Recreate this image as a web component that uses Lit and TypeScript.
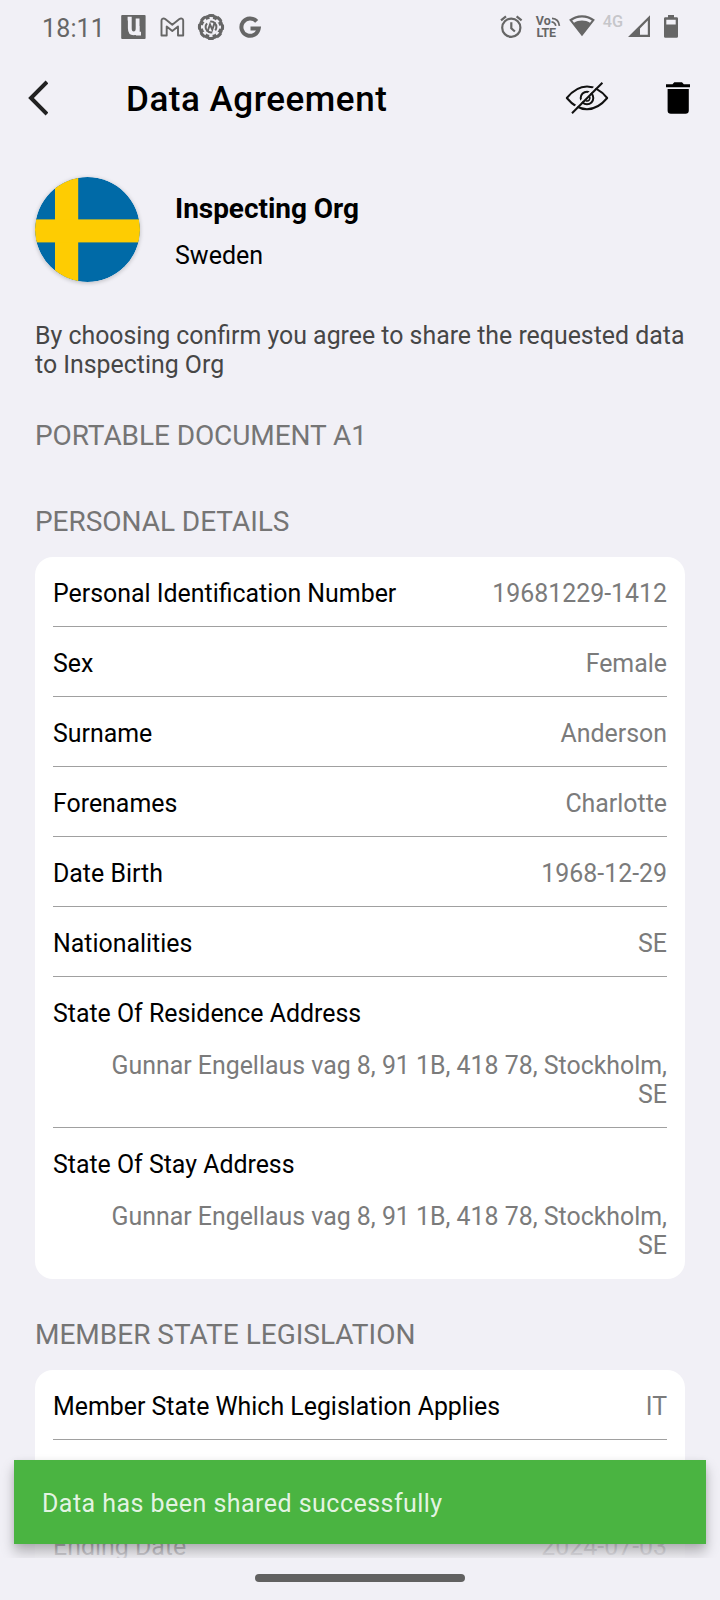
import { LitElement, html, css } from "lit";
import { customElement, property } from "lit/decorators.js";

interface Entry {
  label: string;
  value: string[];
}

const PERSONAL: Entry[] = [
  { label: "Personal Identification Number", value: ["19681229-1412"] },
  { label: "Sex", value: ["Female"] },
  { label: "Surname", value: ["Anderson"] },
  { label: "Forenames", value: ["Charlotte"] },
  { label: "Date Birth", value: ["1968-12-29"] },
  { label: "Nationalities", value: ["SE"] },
  { label: "State Of Residence Address", value: ["Gunnar Engellaus vag 8, 91 1B, 418 78, Stockholm,", "SE"] },
  { label: "State Of Stay Address", value: ["Gunnar Engellaus vag 8, 91 1B, 418 78, Stockholm,", "SE"] },
];

const LEGISLATION: Entry[] = [
  { label: "Member State Which Legislation Applies", value: ["IT"] },
  { label: "Starting Date", value: ["2023-05-21"] },
  { label: "Ending Date", value: ["2024-07-03"] },
];

@customElement("status-bar")
class StatusBar extends LitElement {
  static styles = css`
    :host { display: flex; height: 56px; box-sizing: border-box; padding: 0 42px; align-items: flex-start; justify-content: space-between; color: #666; }
    .group { display: flex; align-items: flex-start; }
    .time { font-size: 25px; line-height: 28px; margin-top: 15px; width: 78px; white-space: nowrap; letter-spacing: 0.15px; }
    svg { display: block; overflow: visible; }
    .t { font-family: Roboto, sans-serif; font-weight: 700; fill: #666; }
    .net { font-family: Roboto, sans-serif; font-weight: 500; fill: #c6c6ca; }
  `;
  render() {
    return html`
      <div class="group">
        <span class="time">18:11</span>
        <svg width="146" height="56" viewBox="120 0 146 56" fill="#666">
          <rect x="121.2" y="15" width="24.4" height="24" rx="1" />
          <path d="M127.600 18.600H129.800V28.200Q129.800 33.300 133.700 33.300T137.600 28.200V18.600M137.800 26V33.600H141" fill="none" stroke="#f1f0f6" stroke-width="3.800" />
          <path d="M161.500 35.500V20.500C161.500 18.400 163.800 18 165.200 19L172.300 24.800L179.400 19C181 18 183.200 18.400 183.200 20.500V35.500H178V26.500L172.300 31L166.700 26.500V35.500Z" fill="none" stroke="#666" stroke-width="1.900" stroke-linejoin="round" />
          <circle cx="211" cy="27" r="12.400" />
          <circle cx="211" cy="27" r="11.800" fill="none" stroke="#666" stroke-width="2.600" stroke-dasharray="5.500 3.768" stroke-dashoffset="2.750" />
          <circle cx="211" cy="27" r="8.300" fill="#f1f0f6" />
          <circle cx="211" cy="27" r="8.900" fill="none" stroke="#f1f0f6" stroke-width="2.200" stroke-dasharray="3.400 3.590" stroke-dashoffset="1.700" />
          <circle cx="211" cy="27" r="5.400" fill="none" stroke="#666" stroke-width="2" stroke-dasharray="13.500 3.465" stroke-dashoffset="-7" />
          <path d="M207.400 32L210 24.400L212.300 29.600L214.900 22" fill="none" stroke="#666" stroke-width="1.900" />
          <path d="M256.700 21.400A8.700 8.700 0 1 0 258.700 28.600H250.500" fill="none" stroke="#666" stroke-width="4" />
        </svg>
      </div>
      <svg width="178" height="56" viewBox="500 0 178 56" fill="#666">
        <g fill="none" stroke="#666" stroke-width="2.200">
          <circle cx="511.300" cy="27.700" r="9.100" />
          <path d="M511.300 22.300v6l3.600 3.200M501 20.300l5-4M521.600 20.300l-5-4" />
        </g>
        <text class="t" x="535.800" y="25.200" font-size="12.500">Vo</text>
        <text class="t" x="536.400" y="37" font-size="12.500" textLength="19.600">LTE</text>
        <path d="M552 18.300q6.800.4 7.400 7.600M551.500 21.800q3.600.4 4.300 4" fill="none" stroke="#666" stroke-width="1.700" />
        <path d="M582 15.200C577 15.200 572.600 17 569.100 19.800L582 36.300L594.900 19.800C591.400 17 587 15.200 582 15.200ZM582 17.600C585.700 17.600 589.100 18.700 591.800 20.500L590 22.800C587.700 21.300 585 20.600 582 20.600S576.300 21.300 574 22.800L572.200 20.500C574.900 18.700 578.300 17.600 582 17.600Z" fill-rule="evenodd" />
        <text class="net" x="602.800" y="26.900" font-size="16.300" textLength="20.400">4G</text>
        <path d="M628 37L650 15.200V37ZM640 34.800H647.800V20.600L640 28.400Z" fill-rule="evenodd" />
        <path d="M668 15h6v2.200h2.600q1.400 0 1.400 1.400v17.800q0 1.400-1.400 1.400h-11.200q-1.400 0-1.400-1.400v-17.800q0-1.400 1.400-1.400h2.600ZM666.300 19.800v4.600h9.400v-4.600Z" fill-rule="evenodd" />
      </svg>
    `;
  }
}

@customElement("detail-card")
class DetailCard extends LitElement {
  @property({ attribute: false }) entries: Entry[] = [];
  static styles = css`
    :host { display: block; margin: 0 35px; padding: 0 18px; background: #fff; border-radius: 18px; }
    .row { display: flex; justify-content: space-between; box-sizing: border-box; padding-top: 22px; border-bottom: 1px solid #a0a0a0; height: 70px; line-height: 29px; font-size: 24.9px; white-space: nowrap; }
    .row:last-child { border-bottom-color: transparent; }
    .row.long { flex-direction: column; justify-content: flex-start; height: 151px; }
    .label { color: #000; }
    .value { color: #7b7b7b; text-align: right; }
    .long .value { margin-top: 23px; }
    .line { display: block; }
  `;
  render() {
    return this.entries.map(
      (e) => html`<div class="row ${e.value.length > 1 ? "long" : ""}">
        <span class="label">${e.label}</span>
        <span class="value">${e.value.map((v) => html`<span class="line">${v}</span>`)}</span>
      </div>`
    );
  }
}

@customElement("app-root")
class AppRoot extends LitElement {
  static styles = css`
    :host { display: flex; flex-direction: column; width: 720px; height: 1600px; overflow: hidden; background: #f1f0f6; font-family: Roboto, sans-serif; color: #000; }
    .bar { display: flex; align-items: center; height: 84px; flex: none; padding: 0 30px 0 28px; }
    .bar svg { display: block; }
    .title { margin: 0; padding: 3px 0 0 78px; flex: 1; font-size: 35px; font-weight: 500; line-height: 41px; white-space: nowrap; letter-spacing: 0.53px; }
    .trash { margin-left: 57px; }
    .body { position: relative; height: 1418px; overflow: hidden; }
    .org { display: flex; padding: 37px 35px 0; height: 105px; }
    .flag { width: 105px; height: 105px; border-radius: 50%; box-shadow: 0 1px 4px rgba(0, 0, 0, 0.22); }
    .names { padding: 15px 0 0 35px; }
    .org-name { font-size: 28px; font-weight: 700; line-height: 34px; white-space: nowrap; letter-spacing: -0.04px; }
    .org-place { font-size: 25px; line-height: 29px; margin-top: 15px; }
    .intro { margin: 39px 35px 0; font-size: 24.88px; line-height: 29px; color: #464646; white-space: nowrap; }
    .section { margin: 0 35px; font-size: 28px; font-weight: 400; line-height: 33px; color: #757575; white-space: nowrap; }
    .doc { margin-top: 40px; letter-spacing: -0.08px; }
    .first { margin-top: 53px; letter-spacing: -0.04px; }
    .next { margin-top: 39px; }
    detail-card { margin-top: 19px; }
    .fade { position: absolute; left: 0; right: 0; bottom: 0; height: 60px; background: linear-gradient(rgba(241, 240, 246, 0), rgba(241, 240, 246, 0.72) 75%, rgba(241, 240, 246, 0.9)); }
    .toast { position: absolute; left: 14px; right: 14px; bottom: 14px; height: 84px; box-sizing: border-box; padding: 29px 28px 0; background: #4ab441; color: rgba(255, 255, 255, 0.87); font-size: 25px; line-height: 29px; letter-spacing: 0.46px; box-shadow: 0 8px 12px rgba(0, 0, 0, 0.26), 0 1px 6px rgba(0, 0, 0, 0.07); }
    .nav { display: flex; justify-content: center; padding-top: 16px; }
    .pill { width: 210px; height: 8px; border-radius: 4px; background: #616161; }
  `;
  render() {
    return html`
      <status-bar></status-bar>
      <header class="bar">
        <svg width="20" height="36" viewBox="28 80 20 36" fill="none" stroke="#222" stroke-width="4"><path d="M47 82L31 98L47 114" /></svg>
        <h1 class="title">Data Agreement</h1>
        <svg width="44" height="36" viewBox="565 80 44 36" fill="none" stroke="#111" stroke-width="2">
          <path d="M566.800 98C573 90.500 580 86.600 587 86.600S601 90.500 607.200 98C601 105.500 594 109.200 587 109.200S573 105.500 566.800 98Z" stroke-linejoin="round" />
          <circle cx="587" cy="98" r="6.300" />
          <path d="M589.400 96.400A2.900 2.900 0 0 1 585.800 100.700" stroke-width="1.600" />
          <path d="M570.600 111.900L601 81.300" stroke="#f1f0f6" stroke-width="2.200" />
          <path d="M572 113.300L602.400 82.700" />
        </svg>
        <svg class="trash" width="24" height="36" viewBox="666 80 24 36"><path d="M666 87.200V84.200H672.500L674.300 82.300H682L683.800 84.200H690.200V87.200ZM667.600 89H688.800V110.500Q688.800 113.800 685.500 113.800H670.900Q667.600 113.800 667.600 110.500Z" /></svg>
      </header>
      <main class="body">
        <div class="org">
          <svg class="flag" width="105" height="105" viewBox="0 0 105 105">
            <clipPath id="disc"><circle cx="52.500" cy="52.500" r="52.500" /></clipPath>
            <g clip-path="url(#disc)">
              <rect width="105" height="105" fill="#006aa7" />
              <rect x="20" width="23.200" height="105" fill="#fecc02" />
              <rect y="42.400" width="105" height="23" fill="#fecc02" />
            </g>
          </svg>
          <div class="names">
            <div class="org-name">Inspecting Org</div>
            <div class="org-place">Sweden</div>
          </div>
        </div>
        <p class="intro">By choosing confirm you agree to share the requested data<br />to Inspecting Org</p>
        <h2 class="section doc">PORTABLE DOCUMENT A1</h2>
        <h2 class="section first">PERSONAL DETAILS</h2>
        <detail-card .entries=${PERSONAL}></detail-card>
        <h2 class="section next">MEMBER STATE LEGISLATION</h2>
        <detail-card .entries=${LEGISLATION}></detail-card>
        <div class="fade"></div>
        <div class="toast" role="status">Data has been shared successfully</div>
      </main>
      <div class="nav"><div class="pill"></div></div>
    `;
  }
}
